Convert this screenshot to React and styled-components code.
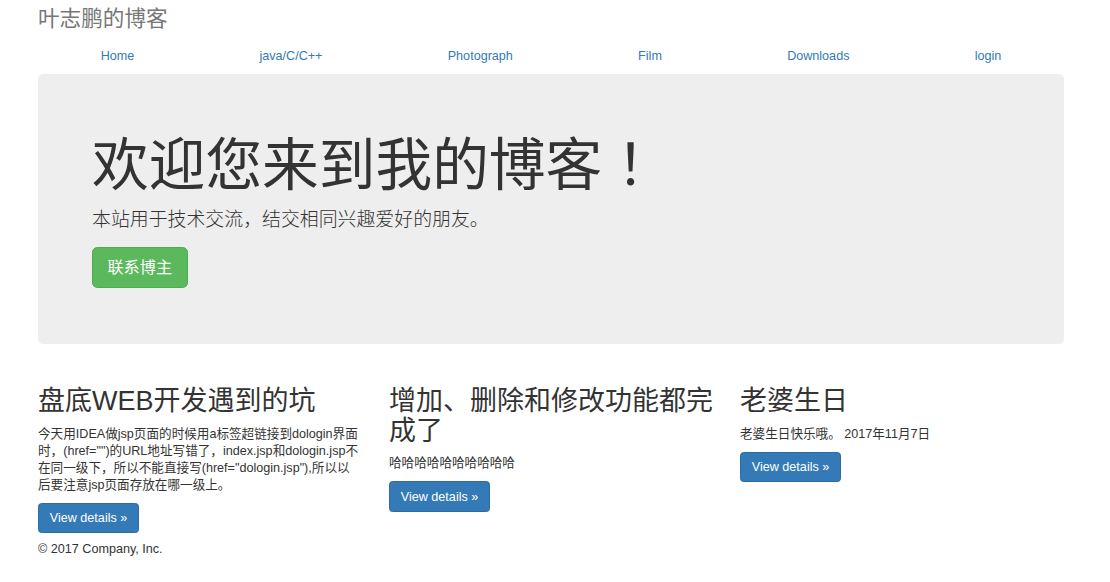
import React from "react";
import styled, { createGlobalStyle } from "styled-components";

const Global = createGlobalStyle`
  html, body { margin: 0; padding: 0; background: #fff; }
  body {
    font-family: "Liberation Sans", Arial, "Noto Sans CJK SC", sans-serif;
    font-size: 12.6px;
    line-height: 18px;
    color: #333;
    text-spacing-trim: space-all;
  }
  * { box-sizing: border-box; }
`;

const Container = styled.div`
  width: 1026px;
  margin-left: 38px;
`;

const SiteTitle = styled.h3`
  margin: 7px 0 7px;
  font-size: 21.6px;
  line-height: 23.8px;
  font-weight: 400;
  color: #777;
`;

const Nav = styled.ul`
  display: table;
  width: 100%;
  margin: 0;
  padding: 0;
  list-style: none;
`;

const NavItem = styled.li`
  display: table-cell;
  width: 1%;
  text-align: center;
`;

const NavLink = styled.a`
  display: block;
  padding: 9px 13.5px;
  line-height: 18px;
  color: #337ab7;
  text-decoration: none;
`;

const Jumbotron = styled.div`
  background: #eee;
  border-radius: 5.4px;
  padding: 43px 54px 42px;
  margin-bottom: 25px;
`;

const Headline = styled.h1`
  margin: 18px 0 9px;
  font-size: 56.7px;
  line-height: 62.4px;
  font-weight: 400;
  color: #333;
`;

const Bang = styled.span`
  font-family: "Noto Sans CJK JP", "Noto Sans CJK SC", sans-serif;
  line-height: 0;
`;

const Lead = styled.p`
  margin: 0 0 13.5px;
  font-size: 18.9px;
  line-height: 27px;
  font-weight: 300;
`;

const ButtonRow = styled.p`
  margin: 0 0 ${(p) => p.$mb || "13.5px"};
  line-height: 0;
`;

const Button = styled.a`
  display: inline-block;
  border: 1px solid ${(p) => (p.$variant === "success" ? "#4cae4c" : "#2e6da4")};
  background: ${(p) => (p.$variant === "success" ? "#5cb85c" : "#337ab7")};
  color: #fff;
  text-decoration: none;
  border-radius: ${(p) => (p.$large ? "5.4px" : "3.6px")};
  padding: ${(p) => (p.$large ? "9px 14.4px" : "5.4px 10.8px")};
  font-size: ${(p) => (p.$large ? "16.2px" : "12.6px")};
  line-height: ${(p) => (p.$large ? "21.6px" : "18px")};
  font-weight: 400;
`;

const Row = styled.div`
  display: grid;
  grid-template-columns: repeat(3, 324px);
  column-gap: 27px;
  align-items: start;
`;

const Col = styled.div``;

const ColTitle = styled.h2`
  margin: 18px 0 9px;
  font-size: 27px;
  line-height: 29.7px;
  font-weight: 400;
  color: #333;
`;

const ColText = styled.p`
  margin: 0 0 9px;
  line-height: 17px;
`;

const Footer = styled.footer`
  margin-top: -2px;
`;

const FooterText = styled.p`
  margin: 0;
  line-height: 18px;
`;

const navItems = ["Home", "java/C/C++", "Photograph", "Film", "Downloads", "login"];

const cols = [
  {
    title: "盘底WEB开发遇到的坑",
    text: '今天用IDEA做jsp页面的时候用a标签超链接到dologin界面时，(href="")的URL地址写错了，index.jsp和dologin.jsp不在同一级下，所以不能直接写(href="dologin.jsp"),所以以后要注意jsp页面存放在哪一级上。',
  },
  { title: "增加、删除和修改功能都完成了", text: "哈哈哈哈哈哈哈哈哈哈" },
  { title: "老婆生日", text: "老婆生日快乐哦。 2017年11月7日" },
];

export default function App() {
  return (
    <>
      <Global />
      <Container>
        <SiteTitle>叶志鹏的博客</SiteTitle>
        <Nav>
          {navItems.map((n) => (
            <NavItem key={n}>
              <NavLink href="#">{n}</NavLink>
            </NavItem>
          ))}
        </Nav>
        <Jumbotron>
          <Headline>
            欢迎您来到我的博客<Bang>！</Bang>
          </Headline>
          <Lead>本站用于技术交流，结交相同兴趣爱好的朋友。</Lead>
          <ButtonRow>
            <Button href="#" $variant="success" $large>
              联系博主
            </Button>
          </ButtonRow>
        </Jumbotron>
        <Row>
          {cols.map((c) => (
            <Col key={c.title}>
              <ColTitle>{c.title}</ColTitle>
              <ColText>{c.text}</ColText>
              <ButtonRow $mb="9px">
                <Button href="#">View details »</Button>
              </ButtonRow>
            </Col>
          ))}
        </Row>
        <Footer>
          <FooterText>© 2017 Company, Inc.</FooterText>
        </Footer>
      </Container>
    </>
  );
}
